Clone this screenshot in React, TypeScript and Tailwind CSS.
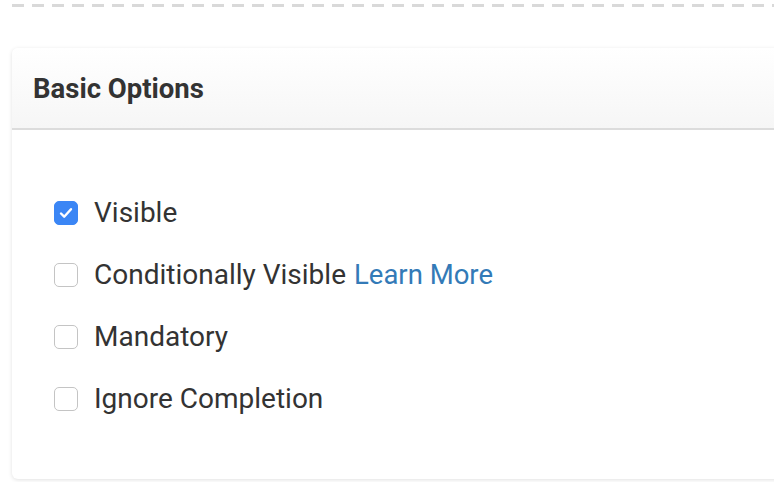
import { useState } from "react";

const OPTIONS = [
  { key: "visible", label: "Visible", checked: true },
  { key: "conditional", label: "Conditionally Visible", checked: false, learnMore: true },
  { key: "mandatory", label: "Mandatory", checked: false },
  { key: "ignore", label: "Ignore Completion", checked: false },
];

function Check({ checked, onClick }: { checked: boolean; onClick: () => void }) {
  return (
    <button
      type="button"
      onClick={onClick}
      className={`flex h-[24px] w-[24px] shrink-0 items-center justify-center rounded-[5px] border ${
        checked ? "border-[#3b86f5] bg-[#3b86f5]" : "border-[#c4c4c4] bg-white"
      }`}
    >
      {checked && (
        <svg width="18" height="18" viewBox="0 0 18 18" fill="none">
          <path d="M4 9.5l3.2 3.2L14 5.2" stroke="white" strokeWidth="2.4" strokeLinecap="round" strokeLinejoin="round" />
        </svg>
      )}
    </button>
  );
}

export default function App() {
  const [state, setState] = useState<Record<string, boolean>>(
    Object.fromEntries(OPTIONS.map((o) => [o.key, o.checked])),
  );

  return (
    <div className="h-[482px] w-[774px] overflow-hidden bg-white font-['Roboto',sans-serif] text-[#333]">
      <div className="flex gap-[8px] pl-[12px] pt-[4px]">
        {Array.from({ length: 39 }).map((_, i) => (
          <div key={i} className="h-[3px] w-[12px] shrink-0 bg-[#d9d9d9]" />
        ))}
      </div>

      <div className="ml-[12px] mt-[41px] w-[790px] rounded-[6px] bg-white shadow-[0_1px_4px_rgba(0,0,0,0.12)]">
        <div className="flex h-[82px] items-center rounded-t-[6px] border-b-2 border-[#dcdcdc] bg-gradient-to-b from-white to-[#f6f6f6] pl-[21px] pt-[2px]">
          <h2 className="text-[27.5px] font-bold text-[#333]">Basic Options</h2>
        </div>

        <div className="flex flex-col pb-[49px] pl-[42px] pt-[52px]">
          {OPTIONS.map((o) => (
            <div key={o.key} className="flex h-[62px] items-center gap-[16px]">
              <Check
                checked={state[o.key]}
                onClick={() => setState((s) => ({ ...s, [o.key]: !s[o.key] }))}
              />
              <span className="text-[28px] leading-none">{o.label}</span>
              {o.learnMore && (
                <a href="#" className="-ml-[8px] text-[27.5px] leading-none text-[#337ab7]">
                  Learn More
                </a>
              )}
            </div>
          ))}
        </div>
      </div>
    </div>
  );
}
